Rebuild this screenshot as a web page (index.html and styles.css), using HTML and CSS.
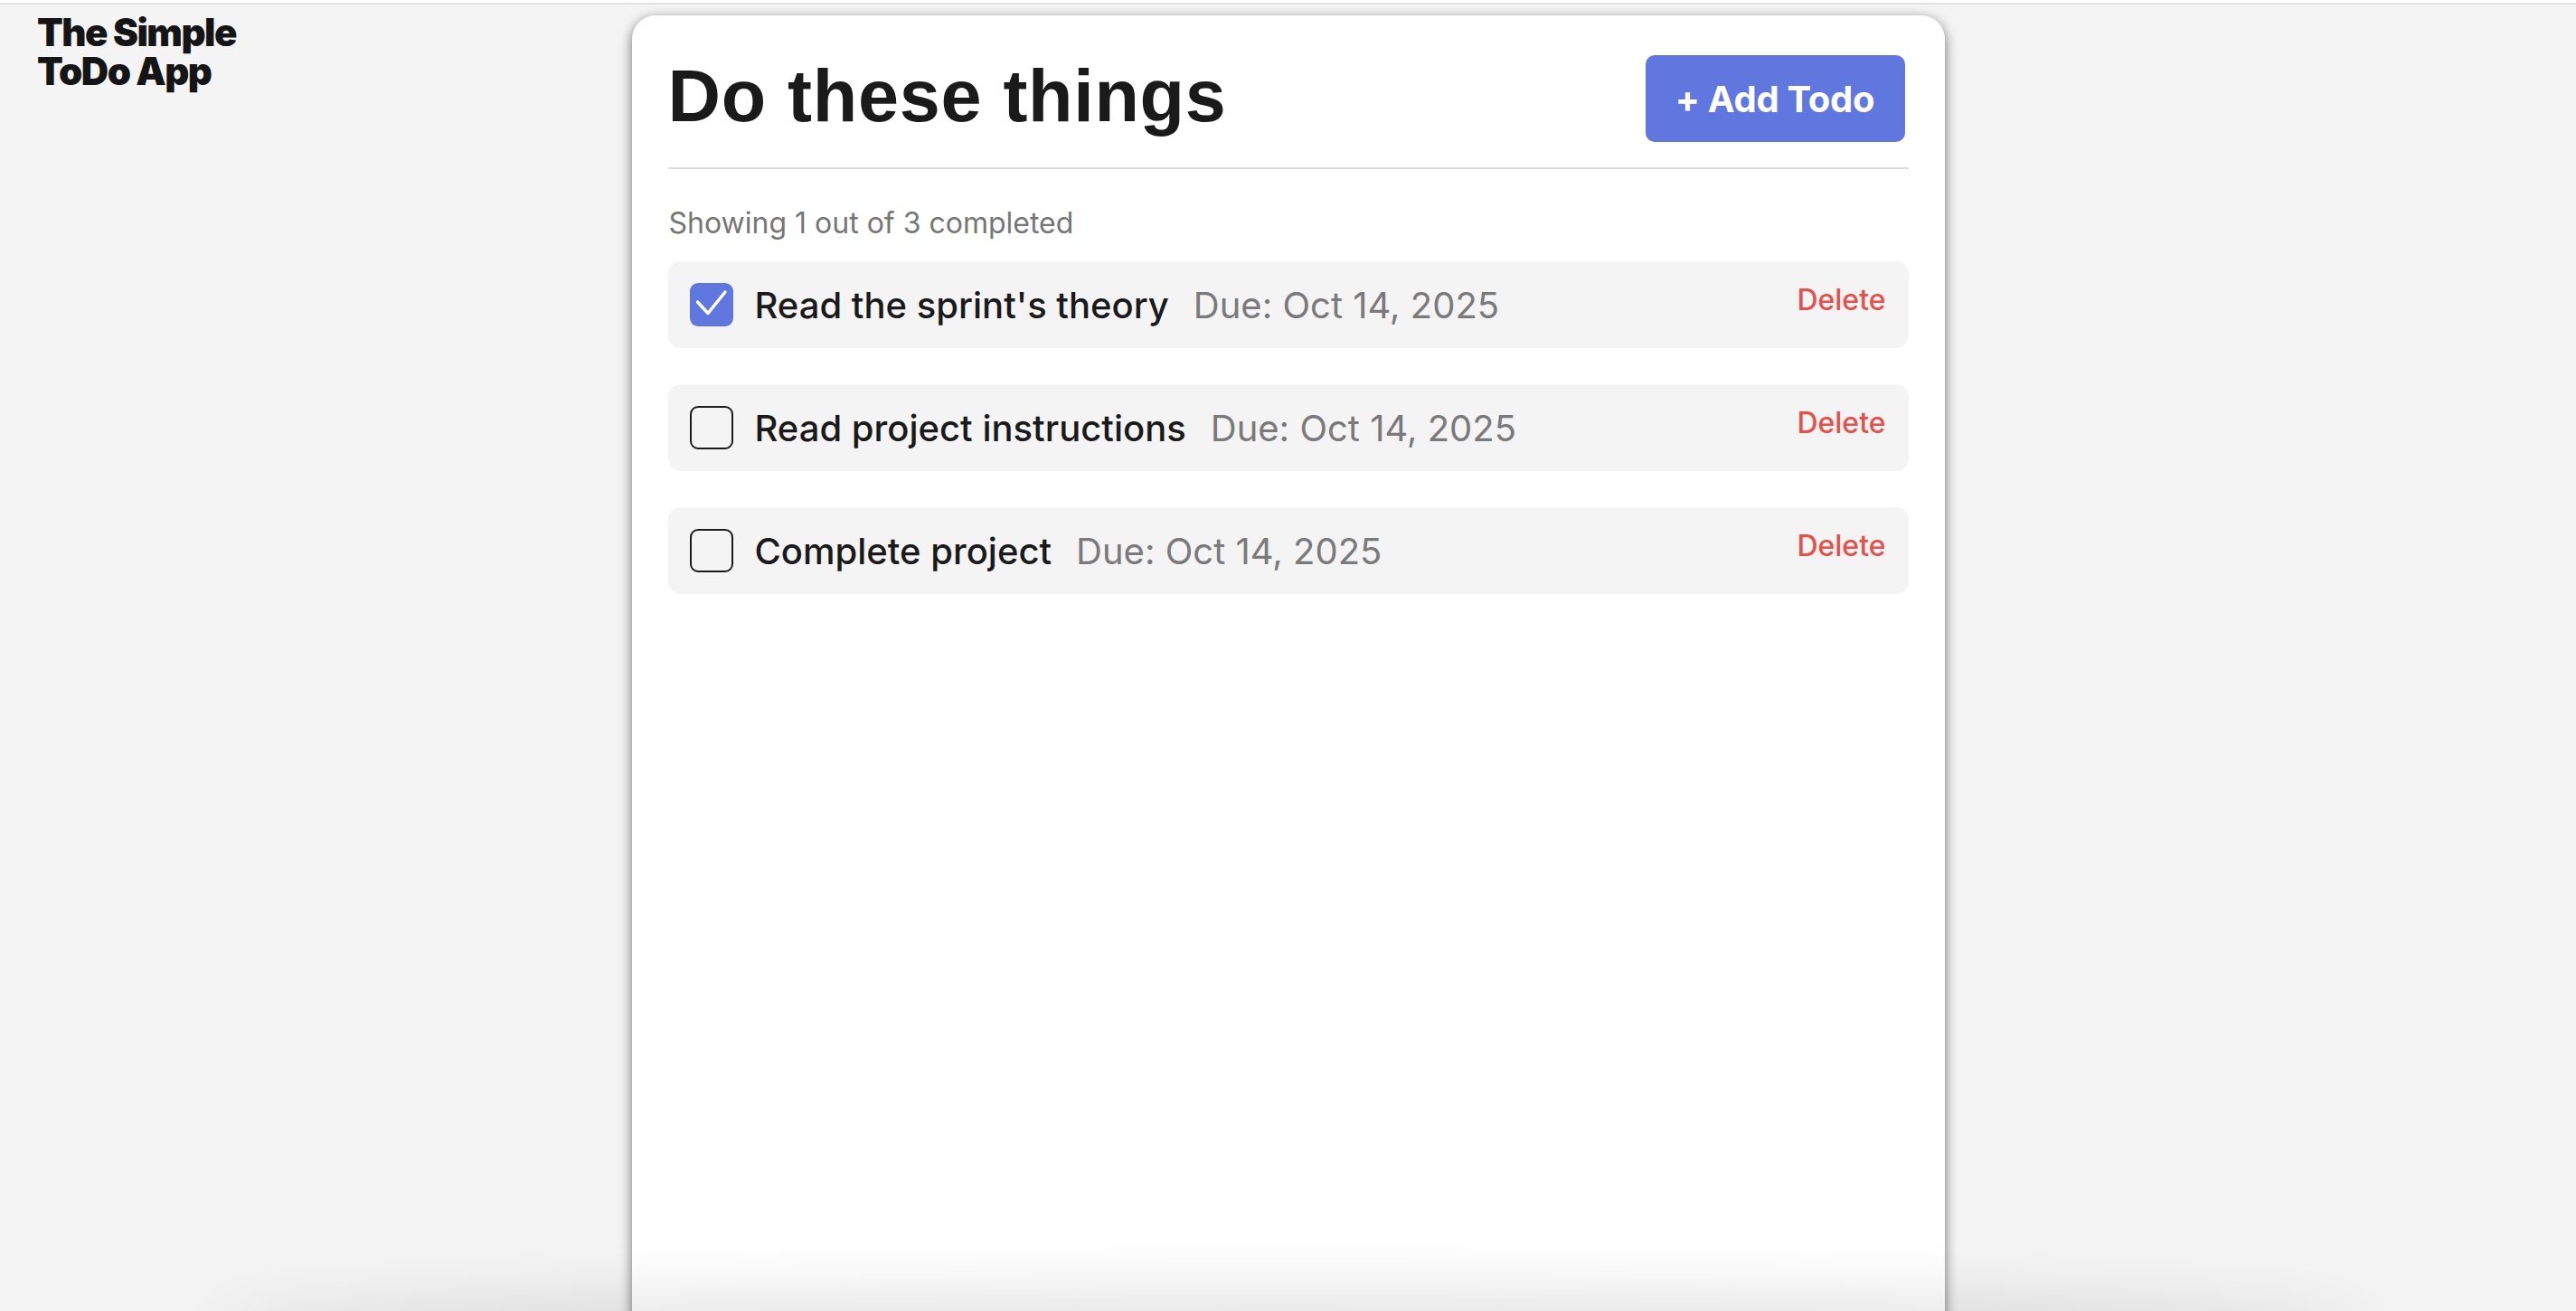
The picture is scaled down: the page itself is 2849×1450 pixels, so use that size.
FILE: index.html
```html
<!DOCTYPE html>
<html lang="en">
<head>
<meta charset="utf-8">
<title>The Simple ToDo App</title>
<link rel="stylesheet" href="styles.css">
</head>
<body>
<div class="topline"></div>
<div class="page">
  <aside class="side">
    <div class="logo"><div>The Simple</div><div>ToDo App</div></div>
  </aside>
  <main class="card">
    <header class="card-header">
      <h1 class="title">Do these things</h1>
      <button class="add-btn">+ Add Todo</button>
    </header>
    <p class="counter">Showing 1 out of 3 completed</p>
    <ul class="todos">
      <li class="todo">
        <span class="check checked">
          <svg viewBox="0 0 48 48" width="48" height="48"><path d="M8.5 21 L20 33.5 L39 10" fill="none" stroke="#fff" stroke-width="3.5" stroke-linecap="round" stroke-linejoin="round"/></svg>
        </span>
        <span class="todo-name">Read the sprint's theory</span>
        <span class="todo-due">Due: Oct 14, 2025</span>
        <button class="delete">Delete</button>
      </li>
      <li class="todo">
        <span class="check"></span>
        <span class="todo-name">Read project instructions</span>
        <span class="todo-due">Due: Oct 14, 2025</span>
        <button class="delete">Delete</button>
      </li>
      <li class="todo">
        <span class="check"></span>
        <span class="todo-name">Complete project</span>
        <span class="todo-due">Due: Oct 14, 2025</span>
        <button class="delete">Delete</button>
      </li>
    </ul>
  </main>
  <div class="side"></div>
</div>
<div class="bottom-shade"></div>
</body>
</html>
```

FILE: styles.css
```css
html, body {
  margin: 0;
  padding: 0;
  height: 100%;
  overflow: hidden;
}

body {
  background: #f4f4f4;
  font-family: Inter, "Noto Sans", sans-serif;
  color: #1a1a1a;
}

.topline {
  height: 3px;
  background: #ffffff;
  border-bottom: 2px solid #e1e1e1;
}

.page {
  display: grid;
  grid-template-columns: 1fr 1452px 1fr;
  align-items: start;
}

.side {
  min-width: 0;
}

.logo {
  margin: 9px 0 0 41px;
  font-size: 42px;
  line-height: 43px;
  font-weight: 900;
  letter-spacing: -1.5px;
  color: #151515;
}

.logo div {
  height: 43px;
}

.card {
  margin-top: 12px;
  background: #ffffff;
  border-radius: 26px 26px 0 0;
  box-shadow: 0 4px 14px rgba(0, 0, 0, 0.55);
  padding: 44px 40px 40px 40px;
  min-height: 1500px;
  box-sizing: border-box;
}

.card-header {
  display: flex;
  justify-content: space-between;
  align-items: flex-start;
  padding-bottom: 28px;
  border-bottom: 2px solid #dcdcdc;
}

.title {
  margin: 5px 0 0 0;
  font-family: "Liberation Sans", Arial, sans-serif;
  font-weight: 700;
  font-size: 81px;
  line-height: 80px;
  letter-spacing: 0.7px;
  color: #1a1a1a;
}

.add-btn {
  margin-right: 4px;
  width: 287px;
  height: 96px;
  border: none;
  border-radius: 10px;
  background: #6177e0;
  color: #ffffff;
  font-family: Inter, sans-serif;
  font-size: 40px;
  font-weight: 700;
  letter-spacing: -0.3px;
  padding: 0;
}

.counter {
  margin: 40px 0 23px 1px;
  font-size: 32px;
  color: #767676;
}

.todos {
  list-style: none;
  margin: 0;
  padding: 0;
  display: flex;
  flex-direction: column;
  gap: 40px;
}

.todo {
  display: flex;
  align-items: center;
  height: 96px;
  padding: 0 25px 0 24px;
  background: #f4f4f4;
  border-radius: 14px;
}

.check {
  width: 48px;
  height: 48px;
  box-sizing: border-box;
  border: 2.5px solid #1c1c1c;
  border-radius: 9px;
  flex: none;
  display: block;
}

.check.checked {
  border: none;
  background: #6177e0;
}

.check svg {
  display: block;
}

.todo-name {
  margin-left: 24px;
  font-size: 40px;
  font-weight: 500;
  color: #1a1a1a;
}

.todo-due {
  margin-left: 27px;
  font-size: 40px;
  color: #7a7a7a;
}

.delete {
  margin-left: auto;
  align-self: flex-start;
  margin-top: 23px;
  background: none;
  border: none;
  padding: 0;
  font-family: Inter, sans-serif;
  font-size: 32px;
  font-weight: 500;
  color: #e5504a;
}

.bottom-shade {
  position: fixed;
  left: 240px;
  right: 240px;
  bottom: -40px;
  height: 40px;
  border-radius: 50%;
  box-shadow: 0 0 70px 20px rgba(0, 0, 0, 0.12);
  pointer-events: none;
}
```
